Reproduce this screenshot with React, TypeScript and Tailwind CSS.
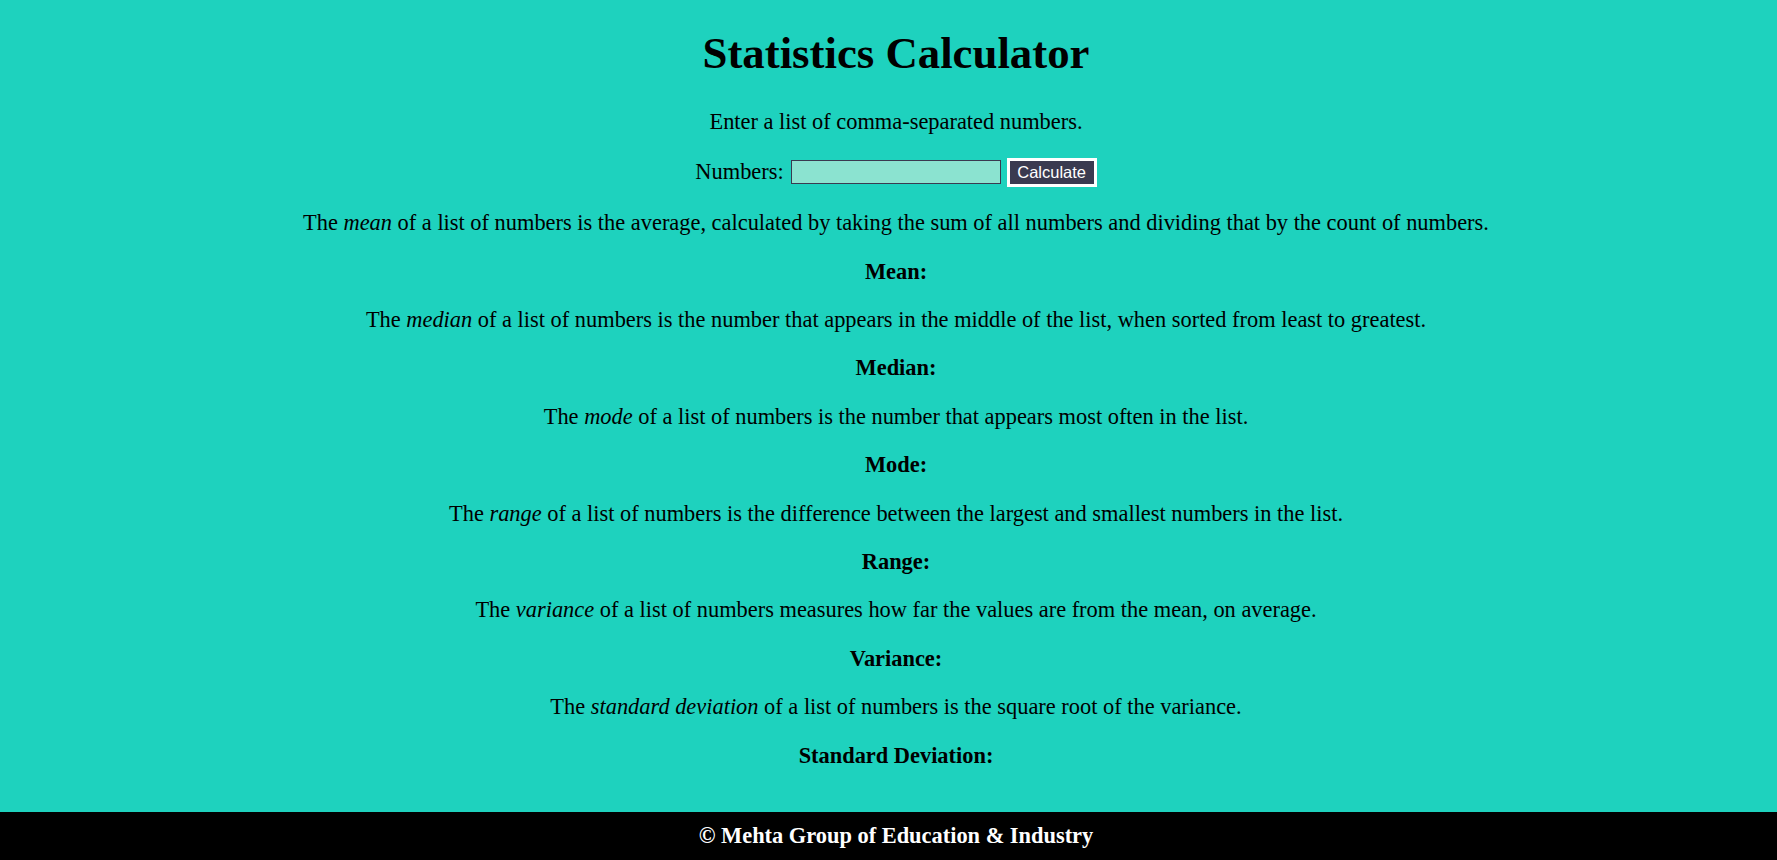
import React from "react";

const stats = [
  { term: "mean", pre: "The ", post: " of a list of numbers is the average, calculated by taking the sum of all numbers and dividing that by the count of numbers.", label: "Mean:" },
  { term: "median", pre: "The ", post: " of a list of numbers is the number that appears in the middle of the list, when sorted from least to greatest.", label: "Median:" },
  { term: "mode", pre: "The ", post: " of a list of numbers is the number that appears most often in the list.", label: "Mode:" },
  { term: "range", pre: "The ", post: " of a list of numbers is the difference between the largest and smallest numbers in the list.", label: "Range:" },
  { term: "variance", pre: "The ", post: " of a list of numbers measures how far the values are from the mean, on average.", label: "Variance:" },
  { term: "standard deviation", pre: "The ", post: " of a list of numbers is the square root of the variance.", label: "Standard Deviation:" },
];

export default function App() {
  const [value, setValue] = React.useState("");

  return (
    <div className="flex min-h-screen flex-col bg-[#1ed2be] text-center font-['Liberation_Serif','Times_New_Roman',serif] text-[22.4px] leading-[normal] text-black">
      <main className="flex-1 pl-[15px]">
        <h1 className="mt-[26.5px] mb-[30px] text-[44.8px] font-bold">Statistics Calculator</h1>
        <p className="my-[22.4px]">Enter a list of comma-separated numbers.</p>
        <div className="my-[22.4px] flex h-[31px] items-center justify-center">
          <label htmlFor="numbers">Numbers:</label>
          <input
            id="numbers"
            type="text"
            value={value}
            onChange={(e) => setValue(e.target.value)}
            className="ml-[7px] h-[24px] w-[210px] border border-[#3a3a50] bg-[#8be3d0] px-1 text-[16px] outline-none"
          />
          <button className="ml-[6px] h-[29px] w-[90px] border-[3px] border-white bg-[#3a3a50] px-[5px] font-['Liberation_Sans',Arial,sans-serif] text-[16.5px] leading-none text-white">
            Calculate
          </button>
        </div>
        {stats.map((s) => (
          <div key={s.label}>
            <p className="my-[22.4px]">
              {s.pre}
              <em>{s.term}</em>
              {s.post}
            </p>
            <p className="my-[22.4px]">
              <strong>{s.label}</strong> <span></span>
            </p>
          </div>
        ))}
      </main>
      <footer className="bg-black py-[11px] pl-[15px] font-bold text-white">© Mehta Group of Education &amp; Industry</footer>
    </div>
  );
}
